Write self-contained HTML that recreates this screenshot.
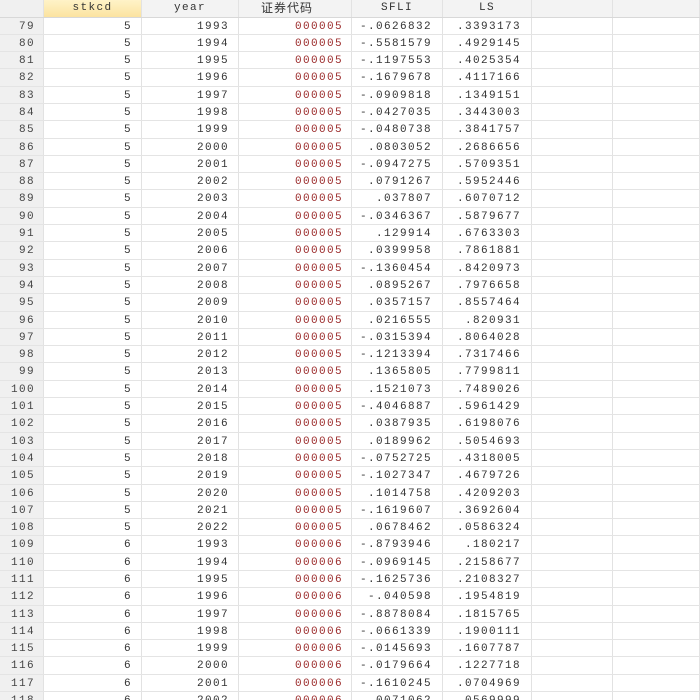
<!DOCTYPE html>
<html><head><meta charset="utf-8"><style>
html,body{margin:0;padding:0;width:700px;height:700px;overflow:hidden;background:#fff}
.r{display:flex;height:17.3px;border-bottom:1px solid #e4e4e4;box-sizing:border-box;font-family:"Liberation Mono",monospace;font-size:11px;letter-spacing:1.4px;color:#333;line-height:18px}
.r div{box-sizing:border-box;border-right:1px solid #e2e2e2;text-align:right;white-space:nowrap;overflow:hidden}
.c0{width:44px;background:#f0f0f0;padding-right:8px;color:#444}
.c1{width:98px;padding-right:9px}
.c2{width:97px;padding-right:9px}
.c3{width:113px;padding-right:8px;color:#9b2a2a}
.c4{width:91px;padding-right:10px}
.c5{width:89px;padding-right:10px}
.c6{width:81px}
.c7{width:87px}
.h{background:#f3f3f3;border-bottom:1px solid #d8d8d8;line-height:17px}
.h div{text-align:center;padding:0;font-size:11px}
.h .c1{background:linear-gradient(#fff3c8,#fbe3a0)}
.h .c3{font-family:"Liberation Sans","Noto Sans CJK SC",sans-serif;font-size:12px;letter-spacing:1px;text-align:left;padding-left:22px;color:#333}
</style></head><body>
<div class="r h" style="height:17.5px"><div class="c0"></div><div class="c1">stkcd</div><div class="c2">year</div><div class="c3">证券代码</div><div class="c4">SFLI</div><div class="c5">LS</div><div class="c6"></div><div class="c7"></div></div>
<div class="r"><div class="c0">79</div><div class="c1">5</div><div class="c2">1993</div><div class="c3">000005</div><div class="c4">-.0626832</div><div class="c5">.3393173</div><div class="c6"></div><div class="c7"></div></div>
<div class="r"><div class="c0">80</div><div class="c1">5</div><div class="c2">1994</div><div class="c3">000005</div><div class="c4">-.5581579</div><div class="c5">.4929145</div><div class="c6"></div><div class="c7"></div></div>
<div class="r"><div class="c0">81</div><div class="c1">5</div><div class="c2">1995</div><div class="c3">000005</div><div class="c4">-.1197553</div><div class="c5">.4025354</div><div class="c6"></div><div class="c7"></div></div>
<div class="r"><div class="c0">82</div><div class="c1">5</div><div class="c2">1996</div><div class="c3">000005</div><div class="c4">-.1679678</div><div class="c5">.4117166</div><div class="c6"></div><div class="c7"></div></div>
<div class="r"><div class="c0">83</div><div class="c1">5</div><div class="c2">1997</div><div class="c3">000005</div><div class="c4">-.0909818</div><div class="c5">.1349151</div><div class="c6"></div><div class="c7"></div></div>
<div class="r"><div class="c0">84</div><div class="c1">5</div><div class="c2">1998</div><div class="c3">000005</div><div class="c4">-.0427035</div><div class="c5">.3443003</div><div class="c6"></div><div class="c7"></div></div>
<div class="r"><div class="c0">85</div><div class="c1">5</div><div class="c2">1999</div><div class="c3">000005</div><div class="c4">-.0480738</div><div class="c5">.3841757</div><div class="c6"></div><div class="c7"></div></div>
<div class="r"><div class="c0">86</div><div class="c1">5</div><div class="c2">2000</div><div class="c3">000005</div><div class="c4">.0803052</div><div class="c5">.2686656</div><div class="c6"></div><div class="c7"></div></div>
<div class="r"><div class="c0">87</div><div class="c1">5</div><div class="c2">2001</div><div class="c3">000005</div><div class="c4">-.0947275</div><div class="c5">.5709351</div><div class="c6"></div><div class="c7"></div></div>
<div class="r"><div class="c0">88</div><div class="c1">5</div><div class="c2">2002</div><div class="c3">000005</div><div class="c4">.0791267</div><div class="c5">.5952446</div><div class="c6"></div><div class="c7"></div></div>
<div class="r"><div class="c0">89</div><div class="c1">5</div><div class="c2">2003</div><div class="c3">000005</div><div class="c4">.037807</div><div class="c5">.6070712</div><div class="c6"></div><div class="c7"></div></div>
<div class="r"><div class="c0">90</div><div class="c1">5</div><div class="c2">2004</div><div class="c3">000005</div><div class="c4">-.0346367</div><div class="c5">.5879677</div><div class="c6"></div><div class="c7"></div></div>
<div class="r"><div class="c0">91</div><div class="c1">5</div><div class="c2">2005</div><div class="c3">000005</div><div class="c4">.129914</div><div class="c5">.6763303</div><div class="c6"></div><div class="c7"></div></div>
<div class="r"><div class="c0">92</div><div class="c1">5</div><div class="c2">2006</div><div class="c3">000005</div><div class="c4">.0399958</div><div class="c5">.7861881</div><div class="c6"></div><div class="c7"></div></div>
<div class="r"><div class="c0">93</div><div class="c1">5</div><div class="c2">2007</div><div class="c3">000005</div><div class="c4">-.1360454</div><div class="c5">.8420973</div><div class="c6"></div><div class="c7"></div></div>
<div class="r"><div class="c0">94</div><div class="c1">5</div><div class="c2">2008</div><div class="c3">000005</div><div class="c4">.0895267</div><div class="c5">.7976658</div><div class="c6"></div><div class="c7"></div></div>
<div class="r"><div class="c0">95</div><div class="c1">5</div><div class="c2">2009</div><div class="c3">000005</div><div class="c4">.0357157</div><div class="c5">.8557464</div><div class="c6"></div><div class="c7"></div></div>
<div class="r"><div class="c0">96</div><div class="c1">5</div><div class="c2">2010</div><div class="c3">000005</div><div class="c4">.0216555</div><div class="c5">.820931</div><div class="c6"></div><div class="c7"></div></div>
<div class="r"><div class="c0">97</div><div class="c1">5</div><div class="c2">2011</div><div class="c3">000005</div><div class="c4">-.0315394</div><div class="c5">.8064028</div><div class="c6"></div><div class="c7"></div></div>
<div class="r"><div class="c0">98</div><div class="c1">5</div><div class="c2">2012</div><div class="c3">000005</div><div class="c4">-.1213394</div><div class="c5">.7317466</div><div class="c6"></div><div class="c7"></div></div>
<div class="r"><div class="c0">99</div><div class="c1">5</div><div class="c2">2013</div><div class="c3">000005</div><div class="c4">.1365805</div><div class="c5">.7799811</div><div class="c6"></div><div class="c7"></div></div>
<div class="r"><div class="c0">100</div><div class="c1">5</div><div class="c2">2014</div><div class="c3">000005</div><div class="c4">.1521073</div><div class="c5">.7489026</div><div class="c6"></div><div class="c7"></div></div>
<div class="r"><div class="c0">101</div><div class="c1">5</div><div class="c2">2015</div><div class="c3">000005</div><div class="c4">-.4046887</div><div class="c5">.5961429</div><div class="c6"></div><div class="c7"></div></div>
<div class="r"><div class="c0">102</div><div class="c1">5</div><div class="c2">2016</div><div class="c3">000005</div><div class="c4">.0387935</div><div class="c5">.6198076</div><div class="c6"></div><div class="c7"></div></div>
<div class="r"><div class="c0">103</div><div class="c1">5</div><div class="c2">2017</div><div class="c3">000005</div><div class="c4">.0189962</div><div class="c5">.5054693</div><div class="c6"></div><div class="c7"></div></div>
<div class="r"><div class="c0">104</div><div class="c1">5</div><div class="c2">2018</div><div class="c3">000005</div><div class="c4">-.0752725</div><div class="c5">.4318005</div><div class="c6"></div><div class="c7"></div></div>
<div class="r"><div class="c0">105</div><div class="c1">5</div><div class="c2">2019</div><div class="c3">000005</div><div class="c4">-.1027347</div><div class="c5">.4679726</div><div class="c6"></div><div class="c7"></div></div>
<div class="r"><div class="c0">106</div><div class="c1">5</div><div class="c2">2020</div><div class="c3">000005</div><div class="c4">.1014758</div><div class="c5">.4209203</div><div class="c6"></div><div class="c7"></div></div>
<div class="r"><div class="c0">107</div><div class="c1">5</div><div class="c2">2021</div><div class="c3">000005</div><div class="c4">-.1619607</div><div class="c5">.3692604</div><div class="c6"></div><div class="c7"></div></div>
<div class="r"><div class="c0">108</div><div class="c1">5</div><div class="c2">2022</div><div class="c3">000005</div><div class="c4">.0678462</div><div class="c5">.0586324</div><div class="c6"></div><div class="c7"></div></div>
<div class="r"><div class="c0">109</div><div class="c1">6</div><div class="c2">1993</div><div class="c3">000006</div><div class="c4">-.8793946</div><div class="c5">.180217</div><div class="c6"></div><div class="c7"></div></div>
<div class="r"><div class="c0">110</div><div class="c1">6</div><div class="c2">1994</div><div class="c3">000006</div><div class="c4">-.0969145</div><div class="c5">.2158677</div><div class="c6"></div><div class="c7"></div></div>
<div class="r"><div class="c0">111</div><div class="c1">6</div><div class="c2">1995</div><div class="c3">000006</div><div class="c4">-.1625736</div><div class="c5">.2108327</div><div class="c6"></div><div class="c7"></div></div>
<div class="r"><div class="c0">112</div><div class="c1">6</div><div class="c2">1996</div><div class="c3">000006</div><div class="c4">-.040598</div><div class="c5">.1954819</div><div class="c6"></div><div class="c7"></div></div>
<div class="r"><div class="c0">113</div><div class="c1">6</div><div class="c2">1997</div><div class="c3">000006</div><div class="c4">-.8878084</div><div class="c5">.1815765</div><div class="c6"></div><div class="c7"></div></div>
<div class="r"><div class="c0">114</div><div class="c1">6</div><div class="c2">1998</div><div class="c3">000006</div><div class="c4">-.0661339</div><div class="c5">.1900111</div><div class="c6"></div><div class="c7"></div></div>
<div class="r"><div class="c0">115</div><div class="c1">6</div><div class="c2">1999</div><div class="c3">000006</div><div class="c4">-.0145693</div><div class="c5">.1607787</div><div class="c6"></div><div class="c7"></div></div>
<div class="r"><div class="c0">116</div><div class="c1">6</div><div class="c2">2000</div><div class="c3">000006</div><div class="c4">-.0179664</div><div class="c5">.1227718</div><div class="c6"></div><div class="c7"></div></div>
<div class="r"><div class="c0">117</div><div class="c1">6</div><div class="c2">2001</div><div class="c3">000006</div><div class="c4">-.1610245</div><div class="c5">.0704969</div><div class="c6"></div><div class="c7"></div></div>
<div class="r"><div class="c0">118</div><div class="c1">6</div><div class="c2">2002</div><div class="c3">000006</div><div class="c4">.0071062</div><div class="c5">.0569999</div><div class="c6"></div><div class="c7"></div></div>
</body></html>
